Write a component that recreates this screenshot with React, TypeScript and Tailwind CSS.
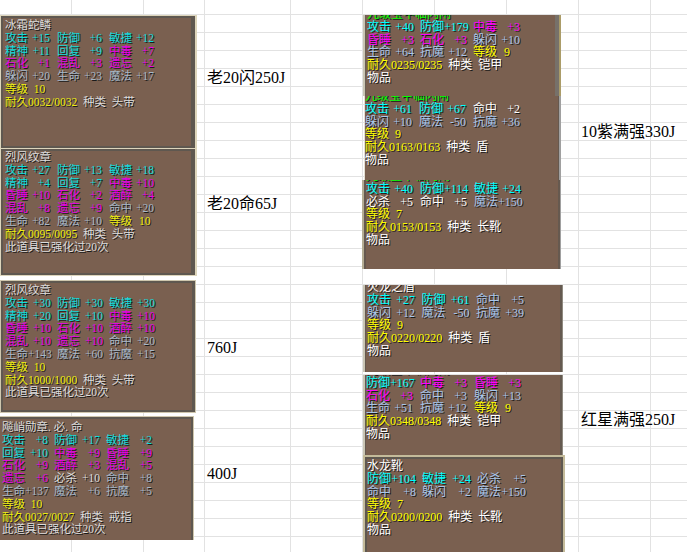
const COLS = [72, 72, 61, 86, 72, 72, 72, 72, 72, 37];
const ROW_COUNT = 31;

const SHEET_TEXT: Record<string, string> = {
  "4-3": "老20闪250J",
  "11-3": "老20命65J",
  "19-3": "760J",
  "26-3": "400J",
  "7-8": "10紫满强330J",
  "23-8": "红星满强250J",
};

type Stat = [string, string, string, boolean?];
type Row = { title?: string; tone?: string; stats?: Stat[]; level?: string; dur?: [string, string]; };

const bright: Record<string, string> = {
  c: "text-[#00ffff]",
  m: "text-[#ff00ff]",
  y: "text-[#ffff00]",
  w: "text-white",
  b: "text-[#a9c6ea]",
  g: "text-[#00ff00]",
};
const dim: Record<string, string> = {
  c: "text-[#12dcdc]",
  m: "text-[#e800e8]",
  y: "text-[#eeee10]",
  w: "text-[#dcdcdc]",
  b: "text-[#a8b8c8]",
  g: "text-[#00e000]",
};

const STRONG: Row = { title: "此道具已强化过20次", tone: "w" };
const ITEM: Row = { title: "物品", tone: "w" };

type CardDef = {
  pos: string;
  outer: string;
  inner: string;
  content: string;
  font: string;
  cell: string;
  gap: string;
  isDim?: boolean;
  rows: Row[];
};

const LEFT_CARDS: CardDef[] = [
  {
    pos: "left-0 top-[15px] w-[197px] h-[134px]",
    outer: "border border-r-2 border-[#ddd5bb]",
    inner: "border-2 border-r-4 border-[#5f5850]",
    content: "ml-[2px] mt-[1px]",
    font: "text-[11.5px]",
    cell: "w-[45px]",
    gap: "gap-[7px]",
    isDim: true,
    rows: [
      { title: "冰霜蛇鳞", tone: "w" },
      { stats: [["攻击", "+15", "c"], ["防御", "+6", "c"], ["敏捷", "+12", "c"]] },
      { stats: [["精神", "+11", "c"], ["回复", "+9", "c"], ["中毒", "+7", "m"]] },
      { stats: [["石化", "+1", "m"], ["混乱", "+3", "m"], ["遗忘", "+2", "m"]] },
      { stats: [["躲闪", "+20", "b"], ["生命", "+23", "b"], ["魔法", "+17", "b"]] },
      { level: "10" },
      { dur: ["0032/0032", "头带"] },
    ],
  },
  {
    pos: "left-0 top-[148px] w-[197px] h-[128px]",
    outer: "border border-r-2 border-[#ddd5bb]",
    inner: "border-2 border-r-4 border-[#5f5850]",
    content: "ml-[2px] mt-0",
    font: "text-[11.5px]",
    cell: "w-[45px]",
    gap: "gap-[7px]",
    isDim: true,
    rows: [
      { title: "烈风纹章", tone: "w" },
      { stats: [["攻击", "+27", "c"], ["防御", "+13", "c"], ["敏捷", "+18", "c"]] },
      { stats: [["精神", "+4", "c"], ["回复", "+7", "c"], ["中毒", "+10", "m"]] },
      { stats: [["昏睡", "+10", "m"], ["石化", "+2", "m"], ["酒醉", "+4", "m"]] },
      { stats: [["混乱", "+8", "m"], ["遗忘", "+9", "m"], ["命中", "+20", "b"]] },
      { stats: [["生命", "+82", "b"], ["魔法", "+10", "b"], ["等级", "10", "y", true]] },
      { dur: ["0095/0095", "头带"] },
      STRONG,
    ],
  },
  {
    pos: "left-0 top-[280px] w-[196px] h-[133px]",
    outer: "border border-[#cfc7ae]",
    inner: "border-2 border-r-[3px] border-[#5f5850]",
    content: "ml-[2px] mt-[1px]",
    font: "text-[11.5px]",
    cell: "w-[46px]",
    gap: "gap-[6px]",
    isDim: true,
    rows: [
      { title: "烈风纹章", tone: "w" },
      { stats: [["攻击", "+30", "c"], ["防御", "+30", "c"], ["敏捷", "+30", "c"]] },
      { stats: [["精神", "+20", "c"], ["回复", "+10", "c"], ["中毒", "+10", "m"]] },
      { stats: [["昏睡", "+10", "m"], ["石化", "+10", "m"], ["酒醉", "+10", "m"]] },
      { stats: [["混乱", "+10", "m"], ["遗忘", "+10", "m"], ["命中", "+20", "b"]] },
      { stats: [["生命", "+143", "b"], ["魔法", "+60", "b"], ["抗魔", "+15", "b"]] },
      { level: "10" },
      { dur: ["1000/1000", "头带"] },
      STRONG,
    ],
  },
  {
    pos: "left-0 top-[416px] w-[194px] h-[124px]",
    outer: "border-t border-r border-[#cfc7ae]",
    inner: "border-t-2 border-r-2 border-[#5f5850]",
    content: "ml-[2px] mt-[2px]",
    font: "text-[11.5px]",
    cell: "w-[46px]",
    gap: "gap-[6px]",
    isDim: true,
    rows: [
      { title: "飚峭勋章. 必. 命", tone: "w" },
      { stats: [["攻击", "+8", "c"], ["防御", "+17", "c"], ["敏捷", "+2", "c"]] },
      { stats: [["回复", "+10", "c"], ["中毒", "+9", "m"], ["昏睡", "+9", "m"]] },
      { stats: [["石化", "+9", "m"], ["酒醉", "+3", "m"], ["混乱", "+5", "m"]] },
      { stats: [["遗忘", "+6", "m"], ["必杀", "+10", "w"], ["命中", "+8", "b"]] },
      { stats: [["生命", "+137", "b"], ["魔法", "+6", "b"], ["抗魔", "+5", "b"]] },
      { level: "10" },
      { dur: ["0027/0027", "戒指"] },
      STRONG,
    ],
  },
];

const RIGHT_CARDS: CardDef[] = [
  {
    pos: "left-[363px] top-[15px] w-[198px] h-[81px]",
    outer: "border-l-2 border-r-2 border-l-[#c9c5b4] border-r-[#ab9c68]",
    inner: "border-l border-r-4 border-l-[#6a5f55] border-r-[#77716a]",
    content: "ml-[1px] -mt-[7px]",
    font: "text-[12px]",
    cell: "w-[47px]",
    gap: "gap-[6px]",
    rows: [
      { title: "九级宝甲临闪闸", tone: "g" },
      { stats: [["攻击", "+40", "c"], ["防御", "+179", "c"], ["中毒", "+3", "m"]] },
      { stats: [["昏睡", "+3", "m"], ["石化", "+3", "m"], ["躲闪", "+10", "b"]] },
      { stats: [["生命", "+64", "b"], ["抗魔", "+12", "b"], ["等级", "9", "y", true]] },
      { dur: ["0235/0235", "铠甲"] },
      ITEM,
    ],
  },
  {
    pos: "left-[364px] top-[96px] w-[197px] h-[84px]",
    outer: "border-l border-r-2 border-l-[#e4e0d4] border-r-[#a0a0a0]",
    inner: "border-r border-[#66594f]",
    content: "ml-0 -mt-[6px]",
    font: "text-[12px]",
    cell: "w-[47px]",
    gap: "gap-[7px]",
    rows: [
      { title: "九级宝甲临闪闸", tone: "g" },
      { stats: [["攻击", "+61", "c"], ["防御", "+67", "c"], ["命中", "+2", "w"]] },
      { stats: [["躲闪", "+10", "b"], ["魔法", "-50", "b"], ["抗魔", "+36", "b"]] },
      { level: "9" },
      { dur: ["0163/0163", "盾"] },
      ITEM,
    ],
  },
  {
    pos: "left-[362px] top-[180px] w-[199px] h-[89px]",
    outer: "border-l-2 border-r border-l-[#b5ad94] border-r-[#a0a0a0]",
    inner: "border-l-2 border-r-2 border-[#66594f]",
    content: "ml-0 -mt-[10px]",
    font: "text-[12px]",
    cell: "w-[47px]",
    gap: "gap-[7px]",
    rows: [
      { title: "九级宝甲临闪闸", tone: "g" },
      { stats: [["攻击", "+40", "c"], ["防御", "+114", "c"], ["敏捷", "+24", "c"]] },
      { stats: [["必杀", "+5", "w"], ["命中", "+5", "w"], ["魔法", "+150", "b"]] },
      { level: "7" },
      { dur: ["0153/0153", "长靴"] },
      ITEM,
    ],
  },
  {
    pos: "left-[363px] top-[285px] w-[200px] h-[87px]",
    outer: "border-l-2 border-r border-l-[#c9c5b4] border-r-[#8f8a80]",
    inner: "border-l border-r-2 border-[#655a50]",
    content: "ml-[1px] -mt-[4px]",
    font: "text-[12px]",
    cell: "w-[48px]",
    gap: "gap-[6.5px]",
    rows: [
      { title: "火龙之盾", tone: "w" },
      { stats: [["攻击", "+27", "c"], ["防御", "+61", "c"], ["命中", "+5", "b"]] },
      { stats: [["躲闪", "+12", "b"], ["魔法", "-50", "b"], ["抗魔", "+39", "b"]] },
      { level: "9" },
      { dur: ["0220/0220", "盾"] },
      ITEM,
    ],
  },
  {
    pos: "left-[363px] top-[375px] w-[200px] h-[80px]",
    outer: "border-l-2 border-r border-l-[#c9c5b4] border-r-[#8f8a80]",
    inner: "border-l border-r-2 border-[#655a50]",
    content: "ml-0 -mt-[11px]",
    font: "text-[12px]",
    cell: "w-[47px]",
    gap: "gap-[7px]",
    rows: [
      { title: "九级宝甲临闪闸", tone: "g" },
      { stats: [["防御", "+167", "c"], ["中毒", "+3", "m"], ["昏睡", "+3", "m"]] },
      { stats: [["石化", "+3", "m"], ["命中", "+3", "b"], ["躲闪", "+13", "b"]] },
      { stats: [["生命", "+51", "b"], ["抗魔", "+12", "b"], ["等级", "9", "y", true]] },
      { dur: ["0348/0348", "铠甲"] },
      ITEM,
    ],
  },
  {
    pos: "left-[363px] top-[455px] w-[202px] h-[97px]",
    outer: "border-2 border-b-0 border-[#c4bb9a]",
    inner: "border-2 border-b-0 border-[#5f5850]",
    content: "ml-0 mt-[1px]",
    font: "text-[12px]",
    cell: "w-[49px]",
    gap: "gap-[6px]",
    rows: [
      { title: "水龙靴", tone: "w" },
      { stats: [["防御", "+104", "c"], ["敏捷", "+24", "c"], ["必杀", "+5", "b"]] },
      { stats: [["命中", "+8", "b"], ["躲闪", "+2", "b"], ["魔法", "+150", "b"]] },
      { level: "7" },
      { dur: ["0200/0200", "长靴"] },
      ITEM,
    ],
  },
];

function Card({ card }: { card: CardDef }) {
  const pal = card.isDim ? dim : bright;
  return (
    <div className={`absolute overflow-hidden ${card.pos} ${card.outer}`}>
      <div className={`h-full overflow-hidden bg-[#7a6050] ${card.inner}`}>
        <div
          className={`${card.content} ${card.font} leading-[12.8px] whitespace-pre [text-shadow:1px_1px_0_#1a1a1a]`}
        >
          {card.rows.map((r, i) => {
            if (r.title) {
              return (
                <div key={i} className={`h-[12.8px] ${pal[r.tone ?? "w"]}`}>
                  {r.title}
                </div>
              );
            }
            if (r.level) {
              return (
                <div key={i} className={`h-[12.8px] ${pal.y}`}>
                  {"等级  " + r.level}
                </div>
              );
            }
            if (r.dur) {
              return (
                <div key={i} className={`h-[12.8px] ${pal.w}`}>
                  <span className={pal.y}>{"耐久" + r.dur[0]}</span>
                  {"  种类  " + r.dur[1]}
                </div>
              );
            }
            return (
              <div key={i} className={`flex h-[12.8px] ${card.gap}`}>
                {r.stats?.map(([label, value, tone, leftValue], j) => (
                  <div key={j} className={`flex ${card.cell} ${leftValue ? "gap-[7px]" : "justify-between"} ${pal[tone]}`}>
                    <span>{label}</span>
                    <span>{value}</span>
                  </div>
                ))}
              </div>
            );
          })}
        </div>
      </div>
    </div>
  );
}

export default function App() {
  return (
    <div className="relative w-[687px] h-[552px] overflow-hidden bg-white font-['Liberation_Serif','Noto_Sans_CJK_SC',serif]">
      <div className="grid grid-cols-[72px_72px_61px_86px_72px_72px_72px_72px_72px_37px] grid-rows-[15px_repeat(30,18px)]">
        {Array.from({ length: ROW_COUNT }).flatMap((_, r) =>
          COLS.map((_, c) => (
            <div
              key={`${r}-${c}`}
              className="relative min-w-0 border-r border-b border-[#e2e2e2] pl-[2px] pt-[1px] text-[16px] leading-[16px] whitespace-nowrap text-black"
            >
              {SHEET_TEXT[`${r}-${c}`]}
            </div>
          )),
        )}
      </div>
      {LEFT_CARDS.map((c, i) => (
        <Card key={i} card={c} />
      ))}
      {RIGHT_CARDS.map((c, i) => (
        <Card key={i} card={c} />
      ))}
    </div>
  );
}
